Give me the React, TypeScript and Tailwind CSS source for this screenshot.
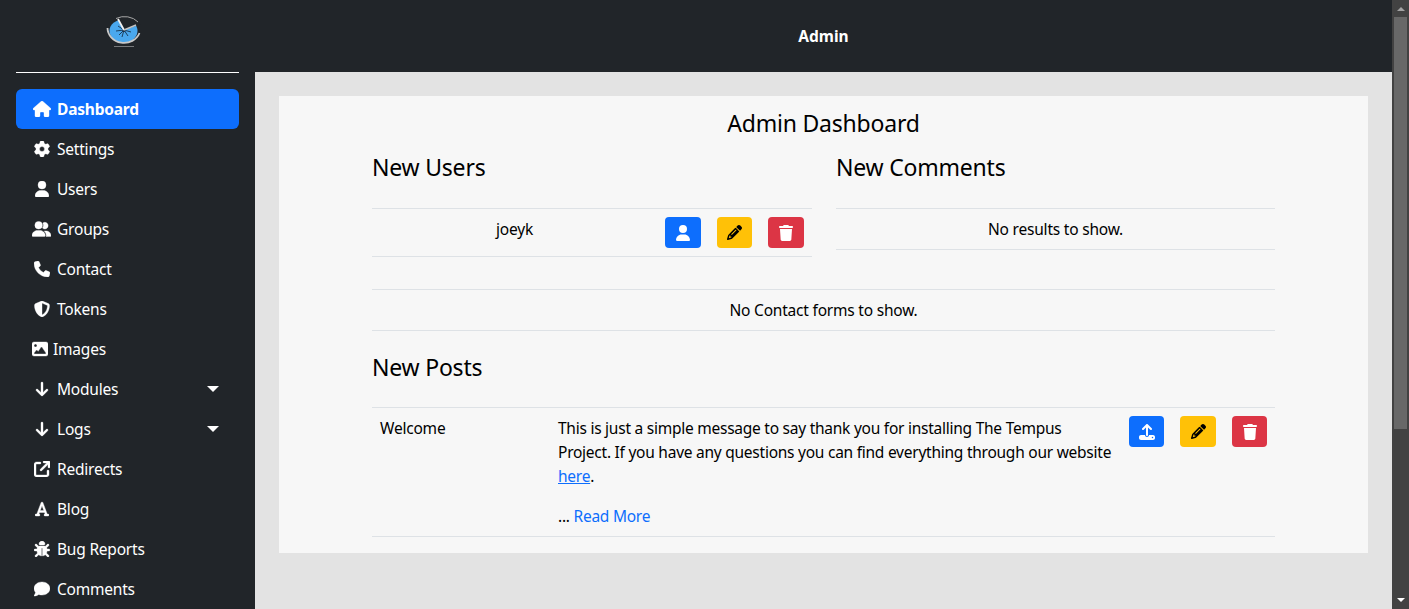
import type { ReactNode } from "react";
import {
  FaArrowDown,
  FaArrowUpRightFromSquare,
  FaBug,
  FaComment,
  FaFont,
  FaGear,
  FaHouse,
  FaImage,
  FaPencil,
  FaPhone,
  FaShieldHalved,
  FaTrash,
  FaUpload,
  FaUser,
  FaUserGroup,
} from "react-icons/fa6";

const NAV_ITEMS = [
  { label: "Dashboard", icon: <FaHouse className="w-[18px] h-4" />, active: true },
  { label: "Settings", icon: <FaGear className="w-4 h-4 ml-[1px]" /> },
  { label: "Users", icon: <FaUser className="w-[14px] h-4 ml-[2px]" /> },
  { label: "Groups", icon: <FaUserGroup className="w-5 h-4 -ml-[1px]" /> },
  { label: "Contact", icon: <FaPhone className="w-4 h-4 ml-[1px]" /> },
  { label: "Tokens", icon: <FaShieldHalved className="w-4 h-4 ml-[1px]" /> },
  { label: "Images", icon: <FaImage className="w-4 h-4 -ml-[1px] max-w-none shrink-0" />, tight: true },
  { label: "Modules", icon: <FaArrowDown className="w-[14px] h-4 ml-[2px]" />, caret: true },
  { label: "Logs", icon: <FaArrowDown className="w-[14px] h-4 ml-[2px]" />, caret: true },
  { label: "Redirects", icon: <FaArrowUpRightFromSquare className="w-4 h-4 ml-[1px]" /> },
  { label: "Blog", icon: <FaFont className="w-[14px] h-4 ml-[2px]" /> },
  { label: "Bug Reports", icon: <FaBug className="w-4 h-4 ml-[1px]" /> },
  { label: "Comments", icon: <FaComment className="w-4 h-4 ml-[1px]" /> },
];

function Logo() {
  return (
    <svg width="36" height="36" viewBox="106 14 36 36" className="block">
      <ellipse cx="123.500" cy="31" rx="14" ry="11.500" fill="#4aa8ee" />
      <path d="M124 30L117 17H141V24Z" fill="#212529" />
      <path d="M124 30L116 31M124 30L122 37M124 30L128 36M124 30L118 26M124 30L119 35M124 30L131 32" stroke="#17334d" strokeWidth="0.9" />
      <circle cx="124" cy="30.500" r="1.500" fill="#17334d" />
      <path d="M124 30L118 19" stroke="#f2f2f2" strokeWidth="1.7" />
      <path d="M124 30L136 25" stroke="#c4c4c4" strokeWidth="1.5" />
      <path d="M116 18.500A17 14 0 0 1 138 22" fill="none" stroke="#a8a8a8" strokeWidth="1" />
      <path d="M107.500 28A16.500 15 0 0 0 139.500 33" fill="none" stroke="#c9c9c9" strokeWidth="1.8" />
      <path d="M114 46.500H134" stroke="#77797b" strokeWidth="1" />
    </svg>
  );
}

function Sidebar() {
  return (
    <aside className="h-full w-[255px] shrink-0 overflow-hidden bg-[#212529] px-4 text-white">
      <div className="h-[73px] border-b border-white pl-[90px] pt-[14px]">
        <Logo />
      </div>
      <nav className="mt-4 flex flex-col">
        {NAV_ITEMS.map((item) => (
          <a
            key={item.label}
            className={
              item.active
                ? "flex h-10 shrink-0 items-center gap-[6px] rounded-md bg-[#0d6efd] pl-[17px] font-bold"
                : "flex h-10 shrink-0 items-center gap-[6px] pl-[17px]"
            }
          >
            <span
              className={
                item.tight
                  ? "flex w-[14px] shrink-0 [&_svg]:stroke-current [&_svg]:[stroke-width:12px]"
                  : "flex w-[18px] shrink-0 [&_svg]:stroke-current [&_svg]:[stroke-width:12px]"
              }
            >
              {item.icon}
            </span>
            <span>{item.label}</span>
            {item.caret && (
              <span className="ml-auto mr-[20px] h-0 w-0 border-x-[6px] border-t-[6px] border-x-transparent border-t-white" />
            )}
          </a>
        ))}
      </nav>
    </aside>
  );
}

function IconButton({ color, wide, children }: { color: string; wide?: boolean; children: ReactNode }) {
  const base = wide ? "w-[36px]" : "w-[35px]";
  return (
    <span className={`flex h-[31px] ${base} items-center justify-center rounded-[4px] ${color}`}>{children}</span>
  );
}

function RowText({ children }: { children: ReactNode }) {
  return <div className="border-y border-[#dee2e6] p-2 text-center">{children}</div>;
}

export default function App() {
  return (
    <div className="flex h-[609px] w-[1409px] overflow-hidden bg-[#e3e3e3] text-[15.5px] leading-6 tracking-[-0.0135em] text-black [font-family:'Noto_Sans',sans-serif]">
      <Sidebar />

      <div className="flex w-[1137px] flex-col">
        <header className="flex h-[72px] shrink-0 items-center justify-center bg-[#212529] text-[15.5px] font-bold tracking-normal text-white">
          Admin
        </header>

        <main className="p-6">
          <section className="h-[457px] bg-[#f7f7f7] pt-[13px]">
            <div className="mx-auto w-[903px]">
              <h1 className="text-center text-[23px] leading-[29px]">Admin Dashboard</h1>

              <div className="mt-[15px] flex justify-between">
                <div className="w-[440px]">
                  <h2 className="mb-[26px] text-[23px] leading-[29px]">New Users</h2>
                  <div className="flex h-[49px] items-start border-y border-[#dee2e6] p-2">
                    <span className="w-[269px] text-center">joeyk</span>
                    <div className="ml-auto flex gap-4">
                      <IconButton color="bg-[#0d6efd]" wide>
                        <FaUser className="h-4 w-[14px] text-white" />
                      </IconButton>
                      <IconButton color="bg-[#ffc107]">
                        <FaPencil className="h-[15px] w-[15px] text-black" />
                      </IconButton>
                      <IconButton color="bg-[#dc3545]" wide>
                        <FaTrash className="h-4 w-[14px] text-white" />
                      </IconButton>
                    </div>
                  </div>
                </div>

                <div className="w-[439px]">
                  <h2 className="mb-[26px] text-[23px] leading-[29px]">New Comments</h2>
                  <RowText>No results to show.</RowText>
                </div>
              </div>

              <div className="mt-8">
                <RowText>No Contact forms to show.</RowText>
              </div>

              <h2 className="mt-[22px] mb-[25px] text-[23px] leading-[29px]">New Posts</h2>

              <div className="flex border-y border-[#dee2e6] p-2">
                <div className="w-[178px] shrink-0">Welcome</div>
                <div className="w-[556px] shrink-0 tracking-[-0.016em]">
                  <p className="mb-4">
                    This is just a simple message to say thank you for installing The Tempus Project. If you have any
                    questions you can find everything through our website{" "}
                    <a className="text-[#0d6efd] underline">here</a>.
                  </p>
                  <p>
                    ... <a className="text-[#0d6efd]">Read More</a>
                  </p>
                </div>
                <div className="ml-auto flex items-start gap-4">
                  <IconButton color="bg-[#0d6efd]">
                    <FaUpload className="h-4 w-4 text-white" />
                  </IconButton>
                  <IconButton color="bg-[#ffc107]" wide>
                    <FaPencil className="h-[15px] w-[15px] text-black" />
                  </IconButton>
                  <IconButton color="bg-[#dc3545]">
                    <FaTrash className="h-4 w-[14px] text-white" />
                  </IconButton>
                </div>
              </div>
            </div>
          </section>
        </main>
      </div>

      {/* Scrollbar */}
      <div className="flex h-full w-[17px] shrink-0 flex-col items-center bg-[#424242]">
        <span className="mt-[7px] h-0 w-0 border-x-[4px] border-b-[4px] border-x-transparent border-b-[#a3a3a3]" />
        <span className="mt-[6px] h-[412px] w-[13px] shrink-0 bg-[#686868]" />
        <span className="mt-auto mb-[7px] h-0 w-0 border-x-[4px] border-t-[4px] border-x-transparent border-t-white" />
      </div>
    </div>
  );
}
